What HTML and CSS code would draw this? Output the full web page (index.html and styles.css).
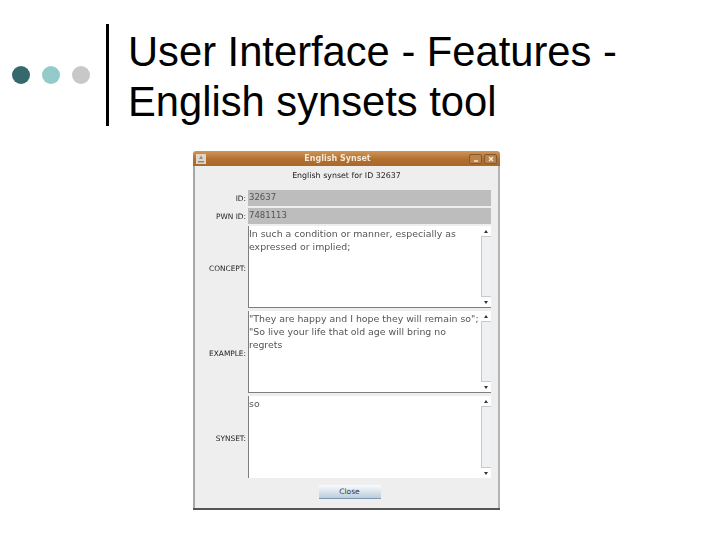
FILE: index.html
```html
<!DOCTYPE html>
<html lang="en">
<head>
<meta charset="utf-8">
<title>User Interface - Features - English synsets tool</title>
<link rel="stylesheet" href="styles.css">
</head>
<body>
<main class="slide">
  <header class="head">
    <div class="dots"><span class="dot dot-a"></span><span class="dot dot-b"></span><span class="dot dot-c"></span></div>
    <div class="rule"></div>
    <h1 class="title">User Interface - Features -<br>English synsets tool</h1>
  </header>
  <section class="window">
    <div class="titlebar">
      <svg class="appicon" width="10" height="10" viewBox="0 0 10 10"><rect width="10" height="10" fill="#e4d6c4"/><path d="M2 7h6v1.5H2z" fill="#7a8aa0"/><path d="M5 1.5 7 5H3z" fill="#8a8f98"/></svg>
      <span class="wintitle">English Synset</span>
      <span class="winbtns">
        <span class="winbtn"><svg width="6" height="6" viewBox="0 0 6 6"><path d="M1 5h4" stroke="#f3eee8" stroke-width="1.4"/></svg></span>
        <span class="winbtn"><svg width="6" height="6" viewBox="0 0 6 6"><path d="M1 1l4 4M5 1 1 5" stroke="#f3eee8" stroke-width="1.4"/></svg></span>
      </span>
    </div>
    <div class="content">
      <div class="heading">English synset for ID 32637</div>
      <div class="row row-id"><span class="label">ID:</span><span class="field">32637</span></div>
      <div class="row row-pwn"><span class="label">PWN ID:</span><span class="field">7481113</span></div>
      <div class="row row-area"><span class="label label-area">CONCEPT:</span>
        <div class="area"><p class="areatext">In such a condition or manner, especially as<br>expressed or implied;</p>
          <div class="scroll"><span class="arrow up"></span><span class="track"></span><span class="arrow down"></span></div></div>
      </div>
      <div class="row row-area"><span class="label label-area">EXAMPLE:</span>
        <div class="area"><p class="areatext">"They are happy and I hope they will remain so";<br>"So live your life that old age will bring no<br>regrets</p>
          <div class="scroll"><span class="arrow up"></span><span class="track"></span><span class="arrow down"></span></div></div>
      </div>
      <div class="row row-area row-last"><span class="label label-area">SYNSET:</span>
        <div class="area"><p class="areatext">so</p>
          <div class="scroll"><span class="arrow up"></span><span class="track"></span><span class="arrow down"></span></div></div>
      </div>
      <div class="actions"><button class="close" type="button">Close</button></div>
    </div>
  </section>
</main>
</body>
</html>
```

FILE: styles.css
```css
html, body { margin: 0; padding: 0; background: #fff; }
.slide { width: 720px; height: 540px; overflow: hidden; font-family: "DejaVu Sans", sans-serif; }
.head { display: flex; align-items: flex-start; padding-top: 24px; height: 127px; box-sizing: border-box; font-family: "Liberation Sans", Arial, sans-serif; }
.dots { display: flex; gap: 12px; padding: 42px 0 0 12px; width: 106px; box-sizing: border-box; }
.dot { width: 18px; height: 18px; border-radius: 50%; flex: none; }
.dot-a { background: #36696e; }
.dot-b { background: #93cbcb; }
.dot-c { background: #c8c8c8; }
.rule { width: 3px; height: 102px; background: #000; }
.title { margin: 3px 0 0 19px; font-weight: 400; font-size: 41.7px; line-height: 50px; color: #000; white-space: nowrap; }

.window { width: 307px; height: 359px; margin: 24px 0 0 193px; box-sizing: border-box; display: flex; flex-direction: column; border-bottom: 2px solid #555; }
.titlebar { height: 15px; flex: none; display: flex; align-items: center; padding: 0 3px 0 3px; background: linear-gradient(#d0965a, #b36f2c 55%, #a9682a); border-radius: 3px 3px 0 0; }
.appicon { flex: none; }
.wintitle { flex: 1; text-align: center; font-size: 8px; font-weight: 700; color: #f2e8dc; filter: blur(.3px); }
.winbtns { display: flex; gap: 2px; }
.winbtn { width: 13px; height: 10px; border: 1px solid #7f5a36; background: #bd8248; border-radius: 2px; display: flex; align-items: center; justify-content: center; box-sizing: border-box; }
.content { flex: 1; background: #eeeeee; border-left: 2px solid #a8a8a8; border-right: 2px solid #b4b4b4; padding: 0 7px 0 0; display: flex; flex-direction: column; box-sizing: border-box; }
.heading { height: 24px; flex: none; box-sizing: border-box; padding: 5px 0 0 7px; text-align: center; font-size: 7.9px; line-height: 10px; color: #222; filter: blur(.35px); }
.row { display: flex; align-items: center; }
.row-id { height: 16px; margin-bottom: 2px; }
.row-pwn { height: 16px; margin-bottom: 2px; }
.row-area { height: 82px; margin-bottom: 3px; }
.row-last { margin-bottom: 0; }
.label { width: 51px; margin-right: 2px; flex: none; text-align: right; font-size: 7.4px; color: #222; filter: blur(.35px); }
.label-area { padding-top: 3px; }
.field { flex: 1; height: 100%; background: #bdbdbd; color: #555; font-size: 8.5px; line-height: 15px; padding-left: 1px; filter: blur(.25px); }
.area { flex: 1; height: 100%; background: #fff; display: flex; border-left: 1px solid #7e7e7e; border-bottom: 1px solid #7e7e7e; box-sizing: border-box; }
.row-last .area { border-bottom: 0; }
.areatext { flex: 1; margin: 0; padding: 1px 0 0; font-size: 9.4px; line-height: 13px; color: #555; filter: blur(.35px); white-space: nowrap; }
.scroll { width: 10px; flex: none; display: flex; flex-direction: column; background: #fff; }
.track { flex: 1; background: #eef0f2; border: 1px solid #c4ccd2; border-width: 1px 0 1px 1px; }
.arrow { height: 10px; flex: none; display: flex; align-items: center; justify-content: center; }
.arrow::before { content: ""; border-left: 2.5px solid transparent; border-right: 2.5px solid transparent; }
.up::before { border-bottom: 3px solid #333; }
.down::before { border-top: 3px solid #333; }
.actions { flex: 1; display: flex; justify-content: center; align-items: flex-start; padding: 7px 0 0 13px; }
.close { width: 62px; height: 14px; padding: 0; border: 0; border-bottom: 1px solid #7f98b0; background: linear-gradient(#fafbfc, #d5e0ea 60%, #b9cddd); font-family: "DejaVu Sans", sans-serif; font-size: 7.5px; color: #333; }
```
